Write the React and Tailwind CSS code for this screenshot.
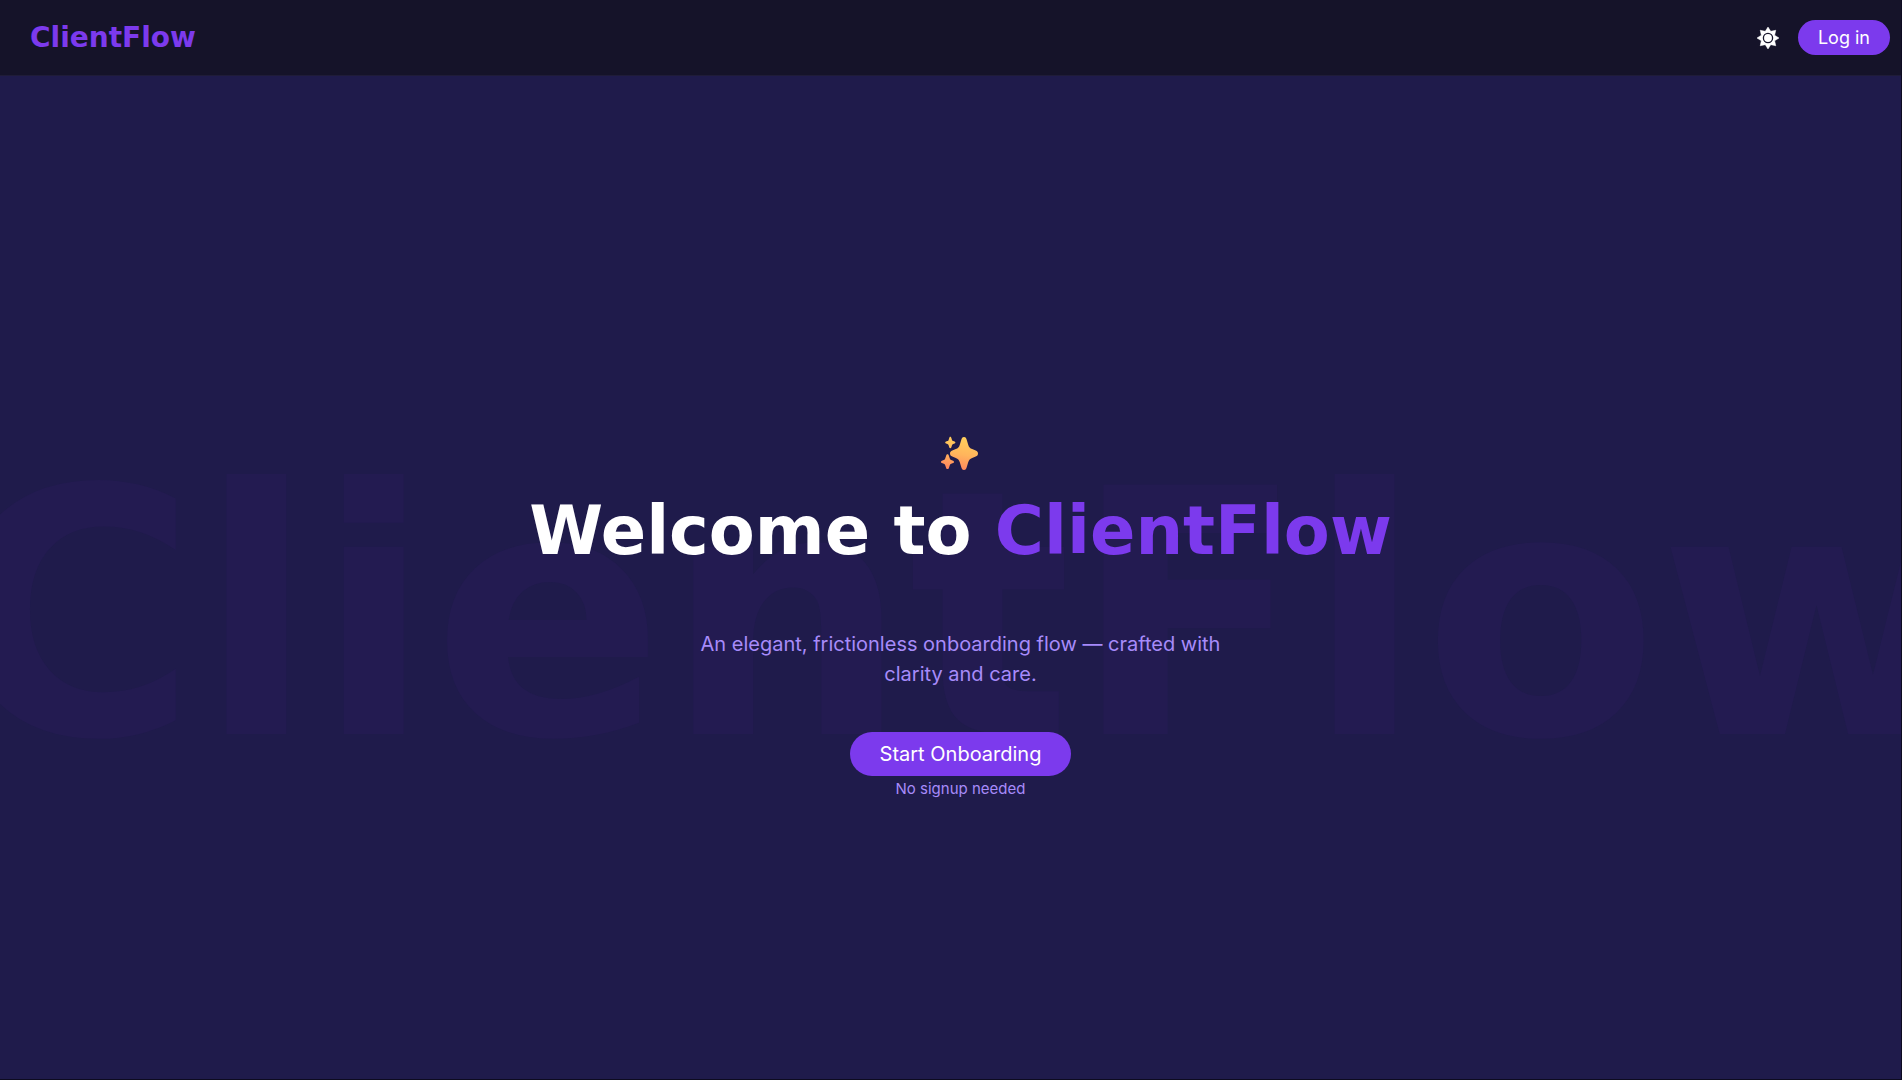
function SunIcon() {
  const points = Array.from({ length: 16 }, (_, i) => {
    const r = i % 2 === 0 ? 11 : 7.2;
    const a = (i * Math.PI) / 8;
    return `${(12 + r * Math.sin(a)).toFixed(2)},${(12 - r * Math.cos(a)).toFixed(2)}`;
  }).join(" ");
  return (
    <svg viewBox="0 0 24 24" className="size-6" aria-hidden="true">
      <polygon points={points} fill="#fff" stroke="#fff" strokeWidth="0.5" strokeLinejoin="round" />
      <circle cx="12" cy="12" r="4.6" fill="#fff" stroke="#151329" strokeWidth="1.3" />
    </svg>
  );
}

function Sparkles() {
  return (
    <svg viewBox="0 0 48 44" className="h-11 w-12" role="img" aria-label="Sparkles">
      <defs>
        <linearGradient id="spark" gradientUnits="userSpaceOnUse" x1="26" y1="6" x2="20" y2="40">
          <stop offset="0" stopColor="#ffcf5c" />
          <stop offset="0.5" stopColor="#ffb55c" />
          <stop offset="1" stopColor="#ff825e" />
        </linearGradient>
      </defs>
      <g fill="url(#spark)">
        <path d="M28 6c1.600 0 2.300 1.200 2.700 2.700l1.500 5c.8 2.500 1.800 3.600 4 4.400l3.500 1.300c1.500.6 2.300 1.600 2.300 3.100s-.8 2.500-2.300 3.100l-3.500 1.300c-2.200.8-3.200 1.900-4 4.400l-1.500 5c-.4 1.500-1.100 2.700-2.700 2.700s-2.300-1.200-2.700-2.700l-1.500-5c-.8-2.500-1.800-3.600-4-4.400l-3.500-1.300C14.800 25 14 24 14 22.500s.8-2.500 2.300-3.100l3.500-1.300c2.200-.8 3.200-1.900 4-4.400l1.500-5C25.700 7.200 26.400 6 28 6z" />
        <path d="M14.300 5.700c.6 0 .8.5 1 1.100l.7 2.100c.2.700.5 1 1.200 1.200l1.400.5c1.100.4 1.100 1.600 0 2l-1.400.5c-.7.2-1 .5-1.200 1.200l-.7 2.100c-.3 1-1.700 1-2 0l-.7-2.100c-.2-.7-.5-1-1.200-1.200l-1.400-.5c-1.100-.4-1.100-1.600 0-2l1.400-.5c.7-.2 1-.5 1.200-1.200l.7-2.100c.2-.6.400-1.100 1-1.100z" />
        <path d="M11.500 23.300c.7 0 1 .5 1.300 1.300l1 2.900c.3.900.6 1.200 1.400 1.500l1.900.7c1.200.5 1.200 1.900 0 2.400l-1.900.7c-.8.3-1.100.6-1.400 1.500l-1 2.900c-.5 1.200-2.100 1.200-2.600 0l-1-2.900c-.3-.9-.6-1.200-1.400-1.500l-1.900-.7c-1.200-.5-1.200-1.900 0-2.400l1.900-.7c.8-.3 1.100-.6 1.400-1.500l1-2.900c.3-.8.6-1.300 1.300-1.300z" />
      </g>
    </svg>
  );
}

export default function App() {
  return (
    <div className="flex min-h-screen flex-col overflow-hidden border-r border-b border-[#0d0b20] bg-[#1f1b4b] font-['Inter',sans-serif]">
      <header className="flex items-center justify-between border-b border-[#1f1c38] bg-[#151329] py-5 pr-[11px] pl-[30px]">
        <a href="#" className="font-['DejaVu_Sans',sans-serif] text-[28px] leading-[34px] font-bold text-[#7c3aed]">
          ClientFlow
        </a>
        <div className="flex items-center gap-[18px]">
          <button type="button" aria-label="Toggle theme">
            <SunIcon />
          </button>
          <button type="button" className="rounded-full bg-[#7c3aed] px-5 py-[5px] text-lg leading-[25px] text-white">
            Log in
          </button>
        </div>
      </header>

      <main className="relative flex flex-1 flex-col items-center justify-center pt-[74px] pl-5">
        <div
          aria-hidden="true"
          className="pointer-events-none absolute inset-0 flex items-center justify-center overflow-hidden pt-[78px] pl-5 select-none"
        >
          <span className="font-['DejaVu_Sans',sans-serif] text-[18vw] leading-none font-bold text-[#231b51]">
            ClientFlow
          </span>
        </div>
        <div className="relative flex flex-col items-center text-center">
          <Sparkles />
          <h1 className="mt-4 font-['DejaVu_Sans',sans-serif] text-[67px] leading-[80px] font-bold text-white">
            Welcome to <span className="text-[#7c3aed]">ClientFlow</span>
          </h1>
          <p className="mt-[58px] max-w-[560px] text-xl leading-[30px] text-[#a78bfa]">
            An elegant, frictionless onboarding flow — crafted with clarity and care.
          </p>
          <button type="button" className="mt-[43px] rounded-full bg-[#7c3aed] px-[30px] py-2 text-xl leading-7 text-white">
            Start Onboarding
          </button>
          <p className="mt-[3px] text-[15px] leading-5 text-[#a78bfa]">No signup needed</p>
        </div>
      </main>
    </div>
  );
}
